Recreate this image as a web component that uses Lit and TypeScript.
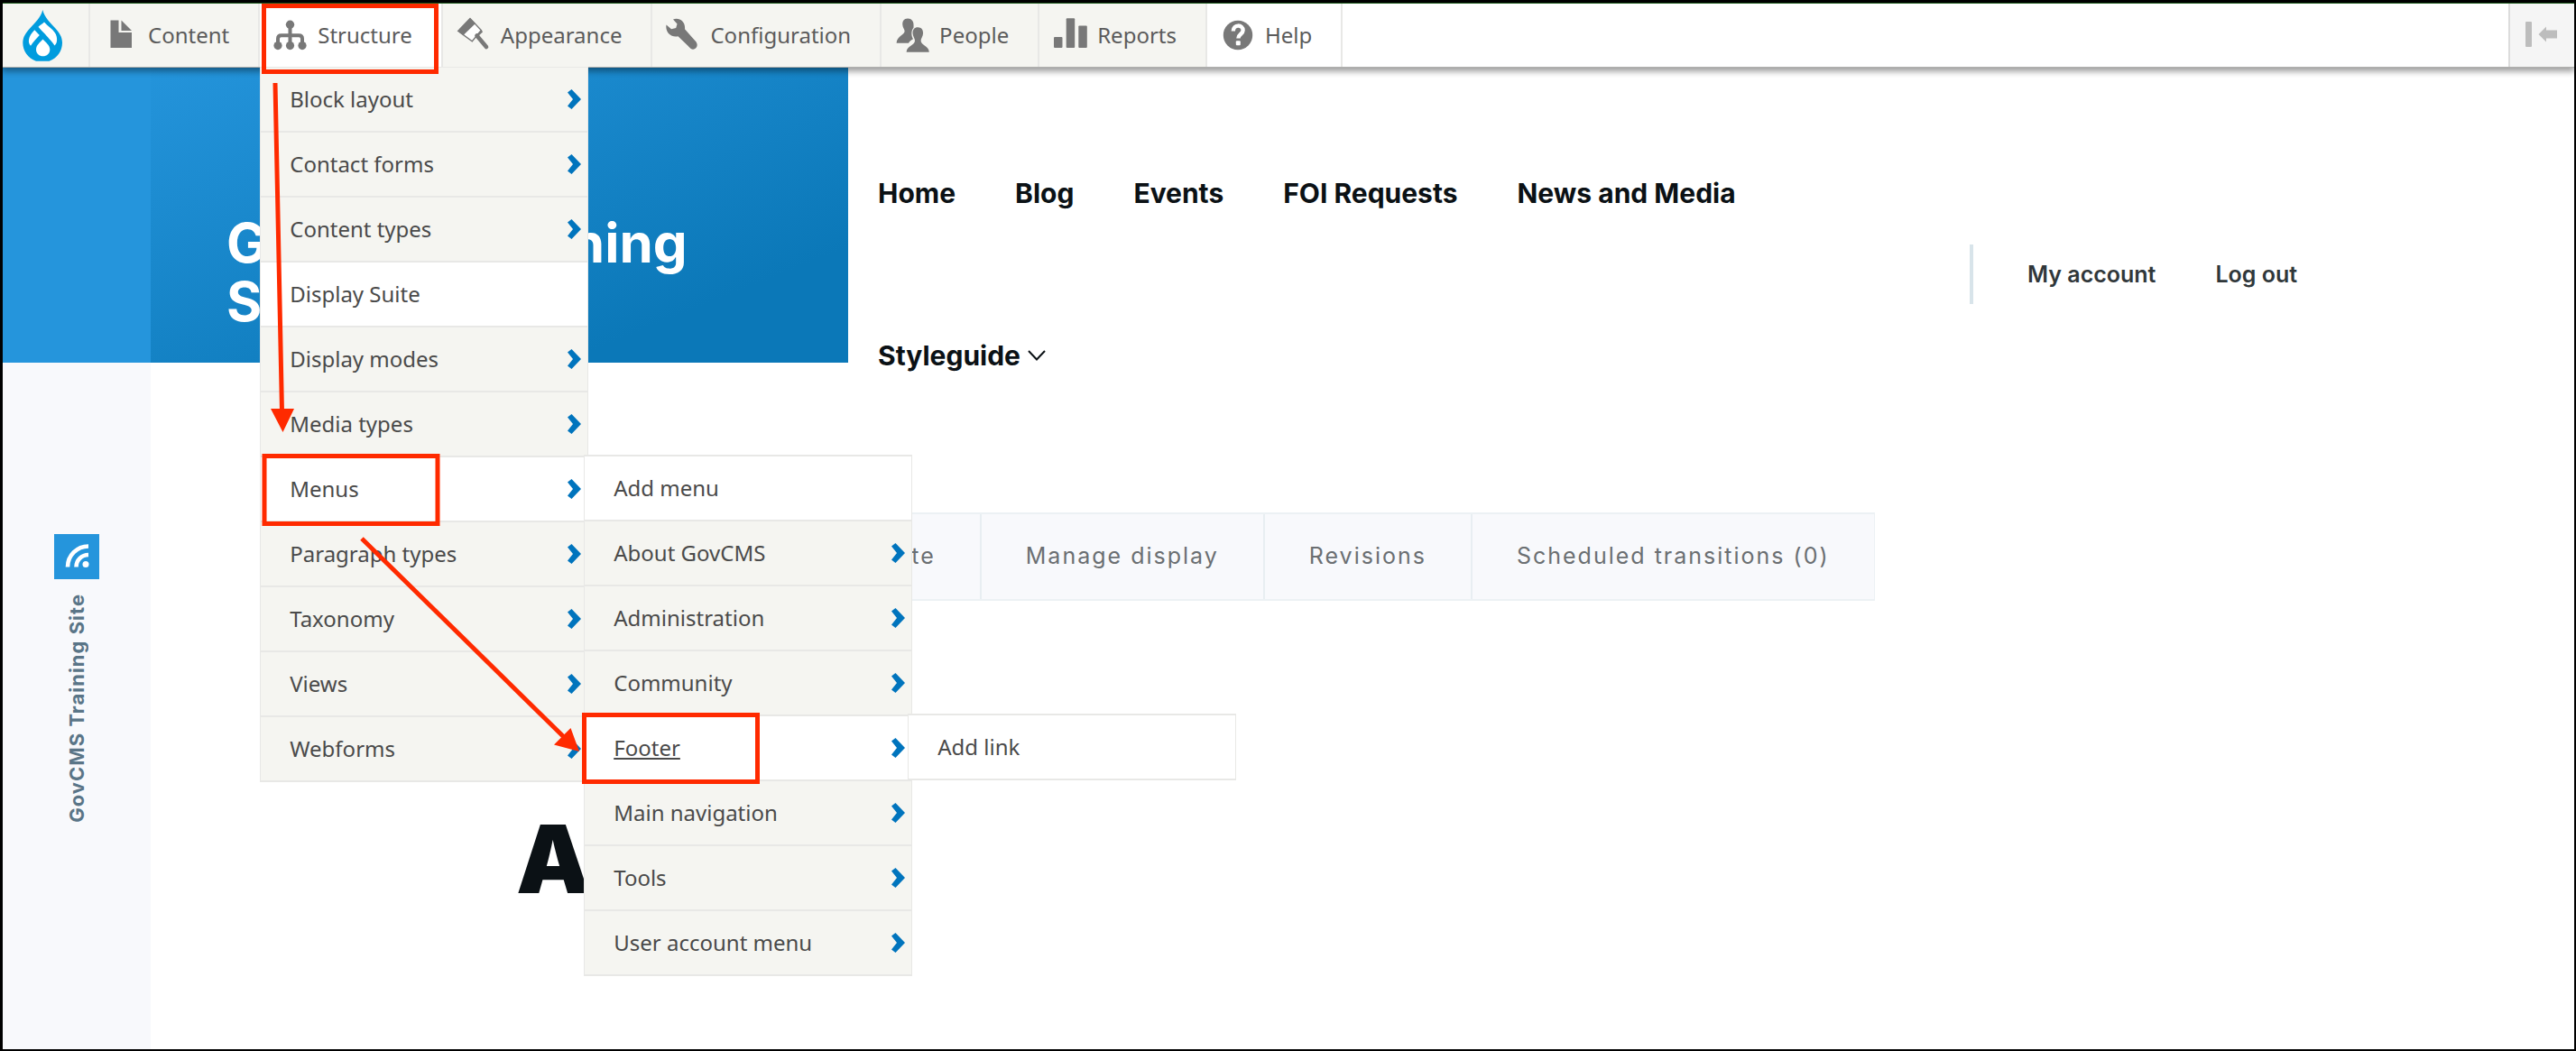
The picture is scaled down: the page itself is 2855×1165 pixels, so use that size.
import { LitElement, html, svg, css, nothing, TemplateResult } from "lit";
import { customElement, property } from "lit/decorators.js";
import { classMap } from "lit/directives/class-map.js";

interface MenuEntry {
  label: string;
  expandable?: boolean;
  focused?: boolean;
  children?: MenuEntry[];
}

interface ToolbarItem {
  label: string;
  icon: TemplateResult;
  plain?: boolean;
}

const parent = (label: string): MenuEntry => ({ label, expandable: true });

const structureMenu: MenuEntry[] = [
  parent("Block layout"),
  parent("Contact forms"),
  parent("Content types"),
  { label: "Display Suite" },
  parent("Display modes"),
  parent("Media types"),
  {
    label: "Menus",
    expandable: true,
    children: [
      { label: "Add menu" },
      parent("About GovCMS"),
      parent("Administration"),
      parent("Community"),
      { label: "Footer", expandable: true, focused: true, children: [{ label: "Add link" }] },
      parent("Main navigation"),
      parent("Tools"),
      parent("User account menu"),
    ],
  },
  parent("Paragraph types"),
  parent("Taxonomy"),
  parent("Views"),
  parent("Webforms"),
];

const toolbarItems: ToolbarItem[] = [
  {
    label: "Content",
    icon: svg`<path d="M8.5 3.5H17.5V17H32V34H8.5Z"/><path d="M20.5 3.5L32 15H20.5Z"/>`,
  },
  {
    label: "Structure",
    plain: true,
    icon: svg`<path d="M6 31V24Q6 20.3 9.7 20.3H29.3Q33 20.3 33 24V31M19.5 8V31" fill="none" stroke="currentColor" stroke-width="4"/>
      <circle cx="19.5" cy="8.3" r="4.7"/><circle cx="6" cy="31.6" r="4.6"/><circle cx="19.5" cy="31.6" r="4.6"/><circle cx="33" cy="31.6" r="4.6"/>`,
  },
  {
    label: "Appearance",
    icon: svg`<path d="M16 1.5L2.7 15.3L18.3 26.7L28.3 14.5Z" fill="#fff" stroke="currentColor" stroke-width="1.4"/>
      <path d="M16 1.3L2.5 15.3L8.5 20L22 7Z"/><path d="M28.8 14L30 16.5L25 21L23.5 19.5Z"/>
      <path d="M23.5 20.5L34 33" fill="none" stroke="currentColor" stroke-width="4.6" stroke-linecap="round"/>`,
  },
  {
    label: "Configuration",
    icon: svg`<path d="M1.5 8.5L7 13.2L12.2 12L13.5 7.5L9 2.5C16 0 23 5 22 13.3L34.6 27.5C38 32.5 32.5 38 28.4 34.7L14.5 21.3C7 23 0 17 1.5 8.5Z"/>`,
  },
  {
    label: "People",
    icon: svg`<path d="M15 1.6C10.8 1.6 9 4.8 9.3 8.4C9.5 11.5 11.6 13.5 11.6 15.5C11.6 19.5 3 21 2.6 28.7H16C17 26.5 19.5 25.3 21 24.2C18.8 20.8 18.700 14.5 21.5 11.7C22.2 4.8 19.6 1.6 15 1.6Z"/>
      <path d="M26.3 11.3C22 11.3 20.3 14.5 20.6 18.2C20.8 21.5 23 23.5 23 26C23 31.500 14 31.5 13.6 38.7H38.8C38.5 31.5 29.6 31.5 29.6 26C29.6 23.5 31.9 21.5 32 18.2C32.3 14.5 30.5 11.3 26.3 11.3Z"/>`,
  },
  {
    label: "Reports",
    icon: svg`<rect x="2" y="22" width="9.5" height="12" rx="1"/><rect x="15.7" y="1.3" width="9.5" height="32.7" rx="1"/><rect x="29.3" y="9.5" width="9.5" height="24.5" rx="1"/>`,
  },
  {
    label: "Help",
    plain: true,
    icon: svg`<circle cx="20" cy="20" r="16.2"/>
      <path d="M14.8 15.5C14.8 7.5 25.8 8 25.6 14.6C25.5 19 20.6 18.5 20.4 23.5" fill="none" stroke="#fff" stroke-width="4.4"/>
      <rect x="17.8" y="26.2" width="5" height="5" rx="1" fill="#fff"/>`,
  },
];

@customElement("admin-menu")
export class AdminMenu extends LitElement {
  @property({ attribute: false }) entries: MenuEntry[] = [];

  static styles = css`
    :host {
      display: block;
    }
    ul {
      list-style: none;
      margin: 0;
      padding: 0;
    }
    .menu {
      box-sizing: border-box;
      width: 364px;
      background: #f5f5f1;
      border: solid #e8e8e6;
      border-width: 0 1px;
    }
    .nested {
      position: absolute;
      left: 358px;
      top: -3px;
      border-top-width: 2px;
      z-index: 1;
    }
    .entry {
      position: relative;
      box-sizing: border-box;
      height: 72px;
      border-bottom: 2px solid #e8e8e6;
    }
    .light {
      background: #fff;
    }
    .link {
      display: flex;
      align-items: center;
      justify-content: space-between;
      height: 100%;
      padding: 0 7px 0 32px;
      color: #4a4a4a;
      font: 24px/36px "Noto Sans", "Open Sans", sans-serif;
      text-decoration: none;
      white-space: nowrap;
    }
    .focused {
      text-decoration: underline;
    }
    .chevron {
      fill: #0074bd;
    }
  `;

  private list(entries: MenuEntry[], nested: boolean): TemplateResult {
    return html`<ul class=${classMap({ menu: true, nested })}>
      ${entries.map(
        (e) => html`<li class=${classMap({ entry: true, light: !e.expandable || !!e.children })}>
          <a class=${classMap({ link: true, focused: !!e.focused })} href="#">
            ${e.label}
            ${e.expandable
              ? html`<svg class="chevron" width="15" height="22" viewBox="0 0 15 22" aria-hidden="true">
                  <path d="M0 3.5L4.500 0L15 11L4.500 22L0 18.500L6 11Z" />
                </svg>`
              : nothing}
          </a>
          ${e.children ? this.list(e.children, true) : nothing}
        </li>`
      )}
    </ul>`;
  }

  render() {
    return this.list(this.entries, false);
  }
}

@customElement("admin-toolbar")
export class AdminToolbar extends LitElement {
  static styles = css`
    :host {
      display: block;
      position: relative;
      z-index: 2;
    }
    .bar {
      display: flex;
      height: 70px;
      background: #fff;
      border-top: 1px solid #1d5a1d;
      border-bottom: 1px solid #b0b0ae;
      box-shadow: 0 3px 7px 1px rgba(0, 0, 0, 0.4);
    }
    .items {
      display: flex;
      flex: 1;
      list-style: none;
      margin: 0;
      padding: 0;
    }
    .item {
      position: relative;
      background: #f5f5f1;
      border-right: 2px solid #e8e8e6;
    }
    .plain {
      background: #fff;
    }
    .link {
      display: flex;
      align-items: center;
      gap: 10px;
      height: 100%;
      padding: 0 32px 0 14px;
      color: #5b5b5b;
      font: 24px/36px "Noto Sans", "Open Sans", sans-serif;
      text-decoration: none;
      white-space: nowrap;
    }
    .home {
      padding: 0 29px 0 22px;
    }
    .icon {
      color: #787878;
      fill: currentColor;
    }
    .dropdown {
      position: absolute;
      top: 100%;
      left: 0;
      padding-top: 1px;
      background: #e8e8e6;
    }
    .marks {
      position: absolute;
      top: 0;
      left: 0;
      z-index: 2;
      pointer-events: none;
      fill: none;
      stroke: #ff2a00;
      stroke-width: 5px;
    }
    .head {
      fill: #ff2a00;
      stroke: none;
    }
    .toggle {
      width: 73px;
      padding: 0;
      border: 0;
      border-left: 2px solid #dcdcdc;
      background: #f5f5f5;
    }
  `;

  private dropdown() {
    return html`<admin-menu class="dropdown" .entries=${structureMenu}></admin-menu>
      <svg class="marks" width="560" height="870" viewBox="0 0 560 870" aria-hidden="true">
        <rect x="4.5" y="2.5" width="191" height="73" />
        <rect x="5" y="501.5" width="192" height="75" />
        <rect x="359.5" y="788.5" width="192" height="74" />
        <path d="M17 88L24.5 452M113 593L338 814" />
        <path class="head" d="M12 449H38L25.5 475ZM354 829L344.5 803L326 821.6Z" />
      </svg>`;
  }

  render() {
    return html`<nav class="bar" aria-label="Administration">
      <ul class="items">
        <li class="item">
          <a class="link home" href="#" aria-label="Home">
            <svg width="44" height="57" viewBox="0 0 44 57" aria-hidden="true">
              <path
                fill="#009cde"
                d="M22.3 0C20 9 14 13.5 8.5 20C3.5 25.5 .3 30 .3 36.5C.3 45.5 6 53.5 15 56.7H29.5C38.5 53.5 44 45.5 44 36.5C44 30 41 25.5 36 20C30.5 13.5 24.6 9 22.3 0Z"
              />
              <path
                fill="#fff"
                d="M24 13.5C22.5 15.5 19.5 16.5 17.5 18.8C18.5 20.5 31 32.5 35.5 39.5C38.8 37 39 30 36 25.5C33 21 28 18 24 13.5ZM13.3 22.3L18.8 28C15.5 31.5 12 35 9 39.7C5.5 36.5 6 29.5 13.3 22.3ZM22.5 32.5C25.5 36 30.3 39 30.3 44C30.3 48.5 26.8 51.3 22.7 51.3C18.5 51.3 15 48.5 15 44C15 39 19.5 36 22.5 32.5Z"
              />
            </svg>
          </a>
        </li>
        ${toolbarItems.map(
          (item) => html`<li class=${classMap({ item: true, plain: !!item.plain })}>
            <a class="link" href="#">
              <svg class="icon" width="40" height="40" viewBox="0 0 40 40" aria-hidden="true">${item.icon}</svg>
              ${item.label}
            </a>
            ${item.label === "Structure" ? this.dropdown() : nothing}
          </li>`
        )}
      </ul>
      <button class="toggle" type="button" aria-label="Vertical orientation">
        <svg width="40" height="40" viewBox="0 0 40 40" fill="#bdbdbd" aria-hidden="true">
          <rect x="1" y="6" width="7" height="28" rx="1" />
          <path d="M15.5 20L24 11.5V15.5H36V24.5H24V28.5Z" />
        </svg>
      </button>
    </nav>`;
  }
}

@customElement("app-root")
export class AppRoot extends LitElement {
  static styles = css`
    :host {
      display: flex;
      flex-direction: column;
      box-sizing: border-box;
      min-height: 100vh;
      border: solid #000;
      border-width: 3px 2px 2px 3px;
      background: #fff;
      font-family: Inter, "Open Sans", sans-serif;
    }
    .page {
      display: grid;
      grid-template-columns: 164px minmax(0, 1fr);
      flex: 1;
    }
    .rail {
      display: flex;
      flex-direction: column;
      align-items: center;
      background: #f8f9fc;
    }
    .rail-top {
      align-self: stretch;
      height: 327px;
      margin-bottom: 190px;
      background: #2595dc;
    }
    .feed {
      display: flex;
      margin-bottom: 16px;
    }
    .site {
      writing-mode: vertical-rl;
      transform: rotate(180deg);
      color: #5a7587;
      font-size: 22px;
      line-height: 28px;
      font-weight: 700;
      letter-spacing: 1px;
    }
    .header {
      display: flex;
      align-items: center;
      height: 457px;
    }
    .brand {
      flex: 0 0 773px;
      align-self: flex-start;
      box-sizing: border-box;
      height: 327px;
      padding: 162px 90px 0 84px;
      background: linear-gradient(158deg, #2494db 0%, #0b78b8 80%);
      color: #fff;
      font-size: 60px;
      line-height: 65px;
      font-weight: 700;
      text-decoration: none;
    }
    .nav {
      display: flex;
      flex-wrap: wrap;
      flex: 0 1 1150px;
      gap: 144px 66px;
      margin: 0 60px 0 33px;
    }
    .nav-link {
      display: flex;
      align-items: center;
      gap: 8px;
      color: #0b1115;
      font-size: 30px;
      line-height: 36px;
      font-weight: 700;
      text-decoration: none;
      white-space: nowrap;
    }
    .account {
      display: flex;
      align-items: center;
      gap: 66px;
      height: 66px;
      padding-left: 60px;
      border-left: 4px solid #d8e4ea;
    }
    .account-link {
      color: #30373a;
      font-size: 25px;
      line-height: 36px;
      font-weight: 600;
      text-decoration: none;
      white-space: nowrap;
    }
    .content {
      padding: 36px 40px 0 405px;
    }
    .tabs {
      display: flex;
      width: max-content;
      margin-left: 326px;
      border: solid #ecf1f4;
      border-width: 2px 1px 2px 0;
      background: #f8f9fc;
    }
    .tab {
      padding: 0 49px 2px;
      border-left: 2px solid #e8eef2;
      color: #6b6f72;
      font-size: 25px;
      line-height: 92px;
      letter-spacing: 2px;
      text-decoration: none;
      white-space: nowrap;
    }
    .title {
      margin: 226px 0 0;
      color: #0b1115;
      font-size: 104px;
      line-height: 120px;
      font-weight: 900;
    }
  `;

  render() {
    return html`
      <admin-toolbar></admin-toolbar>
      <div class="page">
        <aside class="rail">
          <div class="rail-top"></div>
          <a class="feed" href="#" aria-label="RSS feed">
            <svg width="50" height="50" viewBox="0 0 50 50" aria-hidden="true">
              <rect width="50" height="50" fill="#2595dc" />
              <path d="M15 36.5A23 23 0 0 1 38 13.5M24.5 36.5A13.5 13.5 0 0 1 38 23" fill="none" stroke="#fff" stroke-width="4.6" />
              <circle cx="35" cy="33.5" r="3.5" fill="#fff" />
            </svg>
          </a>
          <div class="site">GovCMS Training Site</div>
        </aside>
        <div>
          <header class="header">
            <a class="brand" href="#">GovCMS Training Site</a>
            <nav class="nav" aria-label="Main">
              ${["Home", "Blog", "Events", "FOI Requests", "News and Media"].map(
                (label) => html`<a class="nav-link" href="#">${label}</a>`
              )}
              <a class="nav-link" href="#">
                Styleguide
                <svg width="20" height="12" viewBox="0 0 20 12" fill="none" stroke="#0b1115" stroke-width="2" aria-hidden="true">
                  <path d="M1 1L10 10.5L19 1" />
                </svg>
              </a>
            </nav>
            <nav class="account" aria-label="Account">
              <a class="account-link" href="#">My account</a>
              <a class="account-link" href="#">Log out</a>
            </nav>
          </header>
          <main class="content">
            <nav class="tabs" aria-label="Tabs">
              ${["Delete", "Manage display", "Revisions", "Scheduled transitions (0)"].map(
                (label) => html`<a class="tab" href="#">${label}</a>`
              )}
            </nav>
            <h1 class="title">A</h1>
          </main>
        </div>
      </div>
    `;
  }
}
